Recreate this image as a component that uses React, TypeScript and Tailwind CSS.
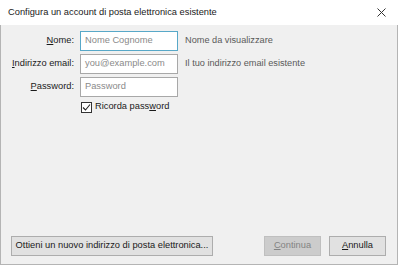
import React from 'react';

const font = { fontFamily: '"Liberation Sans", Arial, sans-serif' };

function Field({ accel, rest, placeholder, hint, focused }: {
  accel: string;
  rest: string;
  placeholder: string;
  hint?: string;
  focused?: boolean;
}) {
  return (
    <div className="flex items-center h-[20px]">
      <div className="w-[73px] text-right text-[9.3px] text-[#1a1a1a] whitespace-nowrap">
        <span className="underline">{accel}</span>{rest}
      </div>
      <div
        className={`ml-[6px] w-[98px] h-[20px] border bg-white px-[4px] flex items-center text-[9.3px] text-[#8a8a8a] whitespace-nowrap ${
          focused ? 'border-[#58a8c8]' : 'border-[#a8a8a8]'
        }`}
      >
        {placeholder}
      </div>
      {hint && <div className="ml-[7px] text-[9.2px] text-[#5a5a5a] whitespace-nowrap">{hint}</div>}
    </div>
  );
}

export default function App() {
  return (
    <div className="w-[398px] h-[265px] bg-white flex flex-col overflow-hidden" style={font}>
      <div className="h-[25px] shrink-0 flex items-center justify-between pl-[8px] pr-[8px] bg-white">
        <span className="text-[9.3px] text-[#1a1a1a]">Configura un account di posta elettronica esistente</span>
        <svg width="9" height="9" viewBox="0 0 9 9" className="mr-[4px]">
          <path d="M0.5 0.5 L8.5 8.5 M8.5 0.5 L0.5 8.5" stroke="#333" strokeWidth="1" />
        </svg>
      </div>
      <div className="flex-1 flex flex-col bg-[#f0f0f0] border-l border-r border-b border-[#b4b4b4] pt-[6px]">
        <div className="flex flex-col gap-[3px]">
          <Field accel="N" rest="ome:" placeholder="Nome Cognome" hint="Nome da visualizzare" focused />
          <Field accel="I" rest="ndirizzo email:" placeholder="you@example.com" hint="Il tuo indirizzo email esistente" />
          <Field accel="P" rest="assword:" placeholder="Password" />
        </div>
        <div className="flex items-center ml-[80px] mt-[3px] h-[14px]">
          <div className="w-[11px] h-[11px] border border-[#333] bg-white flex items-center justify-center">
            <svg width="9" height="9" viewBox="0 0 9 9">
              <path d="M1 4.5 L3.5 7 L8 1.5" stroke="#222" strokeWidth="1.1" fill="none" />
            </svg>
          </div>
          <span className="ml-[3px] text-[9.3px] text-[#1a1a1a]">
            Ricorda pass<span className="underline">w</span>ord
          </span>
        </div>
        <div className="flex-1" />
        <div className="flex items-center pl-[10px] pr-[11px] pb-[8px]">
          <button className="h-[20px] w-[202px] border border-[#adadad] bg-[#e1e1e1] text-[9.3px] text-[#1a1a1a] whitespace-nowrap">
            Ottieni un nuovo indirizzo di posta elettronica...
          </button>
          <div className="flex-1" />
          <button className="h-[20px] w-[57px] border border-[#bfbfbf] bg-[#cccccc] text-[9.3px] text-[#838383]">
            <span className="underline">C</span>ontinua
          </button>
          <button className="ml-[8px] h-[20px] w-[57px] border border-[#adadad] bg-[#e1e1e1] text-[9.3px] text-[#1a1a1a]">
            <span className="underline">A</span>nnulla
          </button>
        </div>
      </div>
    </div>
  );
}
